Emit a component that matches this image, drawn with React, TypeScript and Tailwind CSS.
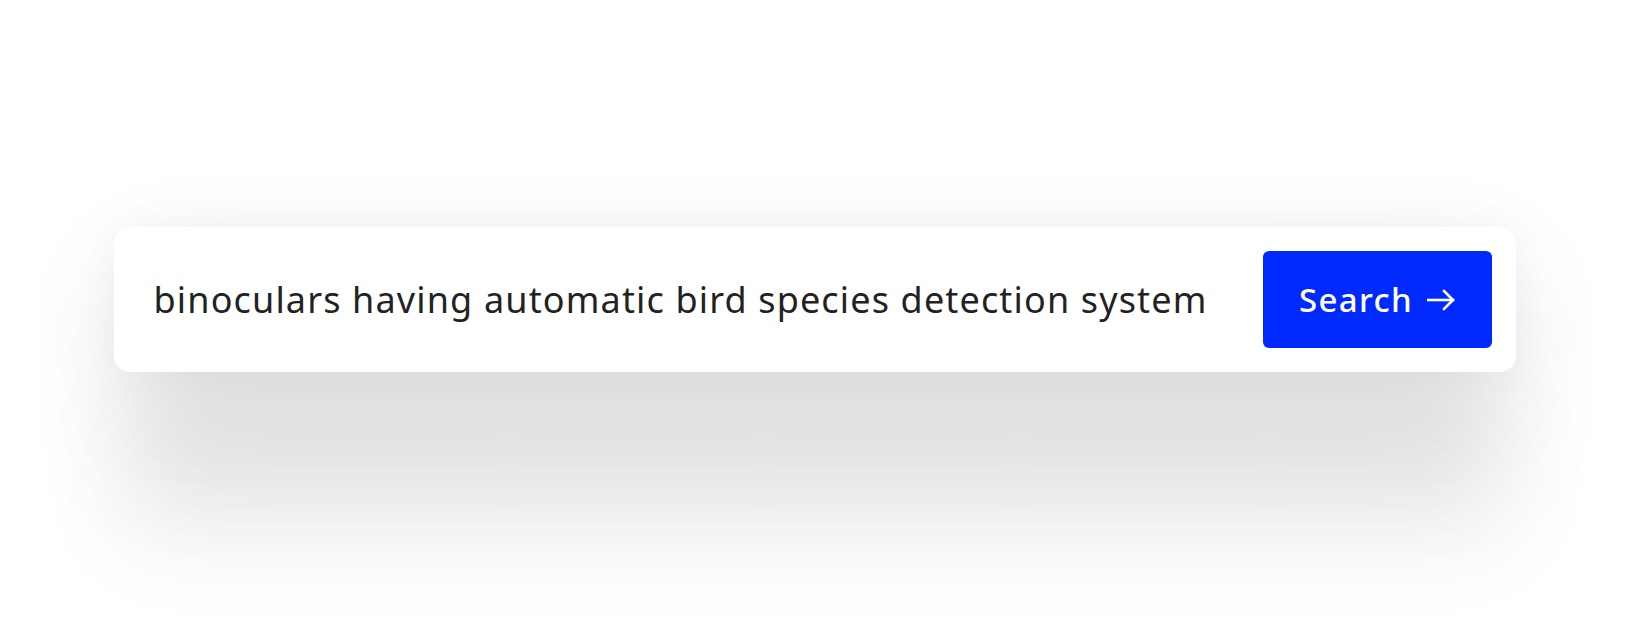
export default function App() {
  return (
    <div className="min-h-screen bg-white pt-[227px]" style={{ fontFamily: '"Noto Sans", "Open Sans", sans-serif' }}>
      {/* 搜索卡片 */}
      <div className="mx-auto flex w-[1402px] items-center justify-between rounded-2xl bg-white py-6 pl-10 pr-6 shadow-[0_0_40px_rgba(0,0,0,0.04),0_30px_110px_-6px_rgba(0,0,0,0.09),0_100px_120px_-6px_rgba(0,0,0,0.07),0_175px_100px_-8px_rgba(0,0,0,0.07)]">
        <p className="text-[36px] leading-none tracking-[1.15px] text-[#222222]">
          binoculars having automatic bird species detection system
        </p>
        <button className="flex h-[97px] w-[229px] items-center justify-center gap-[14px] rounded-md bg-[#0029ff] text-[33px] font-medium tracking-[1.3px] text-white">
          Search
          <svg width="28" height="22" viewBox="0 0 28 22" fill="none" stroke="currentColor" strokeWidth="2.6" strokeLinecap="square">
            <path d="M1 11h25" />
            <path d="M17 2l9 9-9 9" />
          </svg>
        </button>
      </div>
    </div>
  );
}
